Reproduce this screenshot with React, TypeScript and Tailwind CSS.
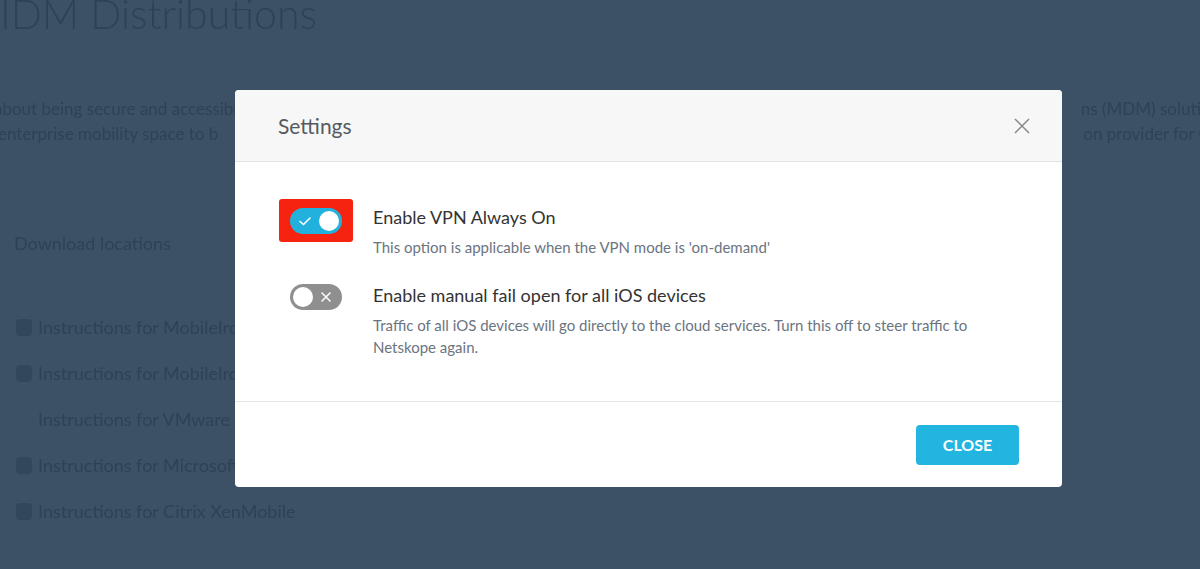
import React from "react";

function Toggle({ on }: { on: boolean }) {
  if (on) {
    return (
      <div className="flex items-center h-[26px] w-[52px] rounded-full bg-[#22b1dc] px-[3px] justify-between">
        <svg width="16" height="16" viewBox="0 0 16 16" className="ml-[4px]">
          <path d="M3 8.5 L6.5 11.5 L13 5" fill="none" stroke="white" strokeWidth="1.6" strokeLinecap="round" strokeLinejoin="round" />
        </svg>
        <div className="h-[20px] w-[20px] rounded-full bg-white" />
      </div>
    );
  }
  return (
    <div className="flex items-center h-[26px] w-[52px] rounded-full bg-[#8f8f8f] px-[3px] justify-between">
      <div className="h-[20px] w-[20px] rounded-full bg-white" />
      <svg width="14" height="14" viewBox="0 0 14 14" className="mr-[6px]">
        <path d="M3 3 L11 11 M11 3 L3 11" stroke="white" strokeWidth="1.5" strokeLinecap="round" />
      </svg>
    </div>
  );
}

export default function App() {
  const bgText = "text-[#2e4257]";
  return (
    <div
      className="relative w-[1200px] h-[569px] overflow-hidden bg-[#3d5166]"
      style={{ fontFamily: "Lato, 'Open Sans', sans-serif" }}
    >
      {/* background page */}
      <div className={`${bgText} blur-[0.5px]`}>
        <div className="mt-[-14px] text-[41px] font-light leading-[56px] whitespace-nowrap">IDM Distributions</div>
        <div className="mt-[54px] text-[17px] leading-[25px] whitespace-nowrap">
          <div className="flex justify-between">
            <span className="ml-[-6px]">about being secure and accessible</span>
            <span className="mr-[-20px]">ns (MDM) solution</span>
          </div>
          <div className="flex justify-between">
            <span className="ml-[-2px]">enterprise mobility space to b</span>
            <span className="mr-[-14px]">on provider for Cl</span>
          </div>
        </div>
        <div className="mt-[84px] ml-[14px] text-[18px] whitespace-nowrap">Download locations</div>
        <div className="mt-[58px] ml-[16px] flex flex-col gap-[22px] text-[18px] leading-[24px]">
          {[
            "Instructions for MobileIron",
            "Instructions for MobileIron Cloud",
            "Instructions for VMware",
            "Instructions for Microsoft",
            "Instructions for Citrix XenMobile",
          ].map((t, i) => (
            <div key={i} className="flex items-center gap-[6px] whitespace-nowrap">
              <div className={`w-[16px] h-[17px] ${i === 2 ? "" : "rounded-sm bg-[#33475c]"}`} />
              <span>{t}</span>
            </div>
          ))}
        </div>
      </div>

      {/* modal */}
      <div className="absolute left-[235px] top-[90px] w-[827px] h-[397px] rounded-[4px] bg-white flex flex-col overflow-hidden">
        <div className="h-[72px] shrink-0 bg-[#f7f7f7] border-b border-[#e3e3e3] flex items-center justify-between pl-[43px] pr-[31px]">
          <span className="text-[21px] text-[#555a5f]">Settings</span>
          <svg width="18" height="18" viewBox="0 0 18 18">
            <path d="M2 2 L16 16 M16 2 L2 16" stroke="#8a8a8a" strokeWidth="1.5" />
          </svg>
        </div>
        <div className="flex-1 border-b border-[#e3e3e3] pl-[44px] pt-[37px]">
          <div className="flex">
            <div className="w-[74px] h-[43px] bg-[#f5230f] rounded-[3px] flex items-center justify-center shrink-0">
              <Toggle on />
            </div>
            <div className="ml-[20px]">
              <div className="text-[18px] text-[#333] leading-[24px] mt-[6px]">Enable VPN Always On</div>
              <div className="text-[15px] text-[#6b7480] leading-[22px] mt-[7px]">
                This option is applicable when the VPN mode is 'on-demand'
              </div>
            </div>
          </div>
          <div className="flex mt-[25px]">
            <div className="w-[74px] flex justify-center pt-[1px] shrink-0">
              <Toggle on={false} />
            </div>
            <div className="ml-[20px]">
              <div className="text-[18px] text-[#333] leading-[24px]">Enable manual fail open for all iOS devices</div>
              <div className="text-[15px] text-[#6b7480] leading-[22px] mt-[7px] w-[620px]">
                Traffic of all iOS devices will go directly to the cloud services. Turn this off to steer traffic to Netskope again.
              </div>
            </div>
          </div>
        </div>
        <div className="h-[85px] shrink-0 flex items-center justify-end pr-[43px]">
          <button className="w-[103px] h-[40px] rounded-[4px] bg-[#21b5e0] text-white font-bold text-[16px]">
            CLOSE
          </button>
        </div>
      </div>
    </div>
  );
}
